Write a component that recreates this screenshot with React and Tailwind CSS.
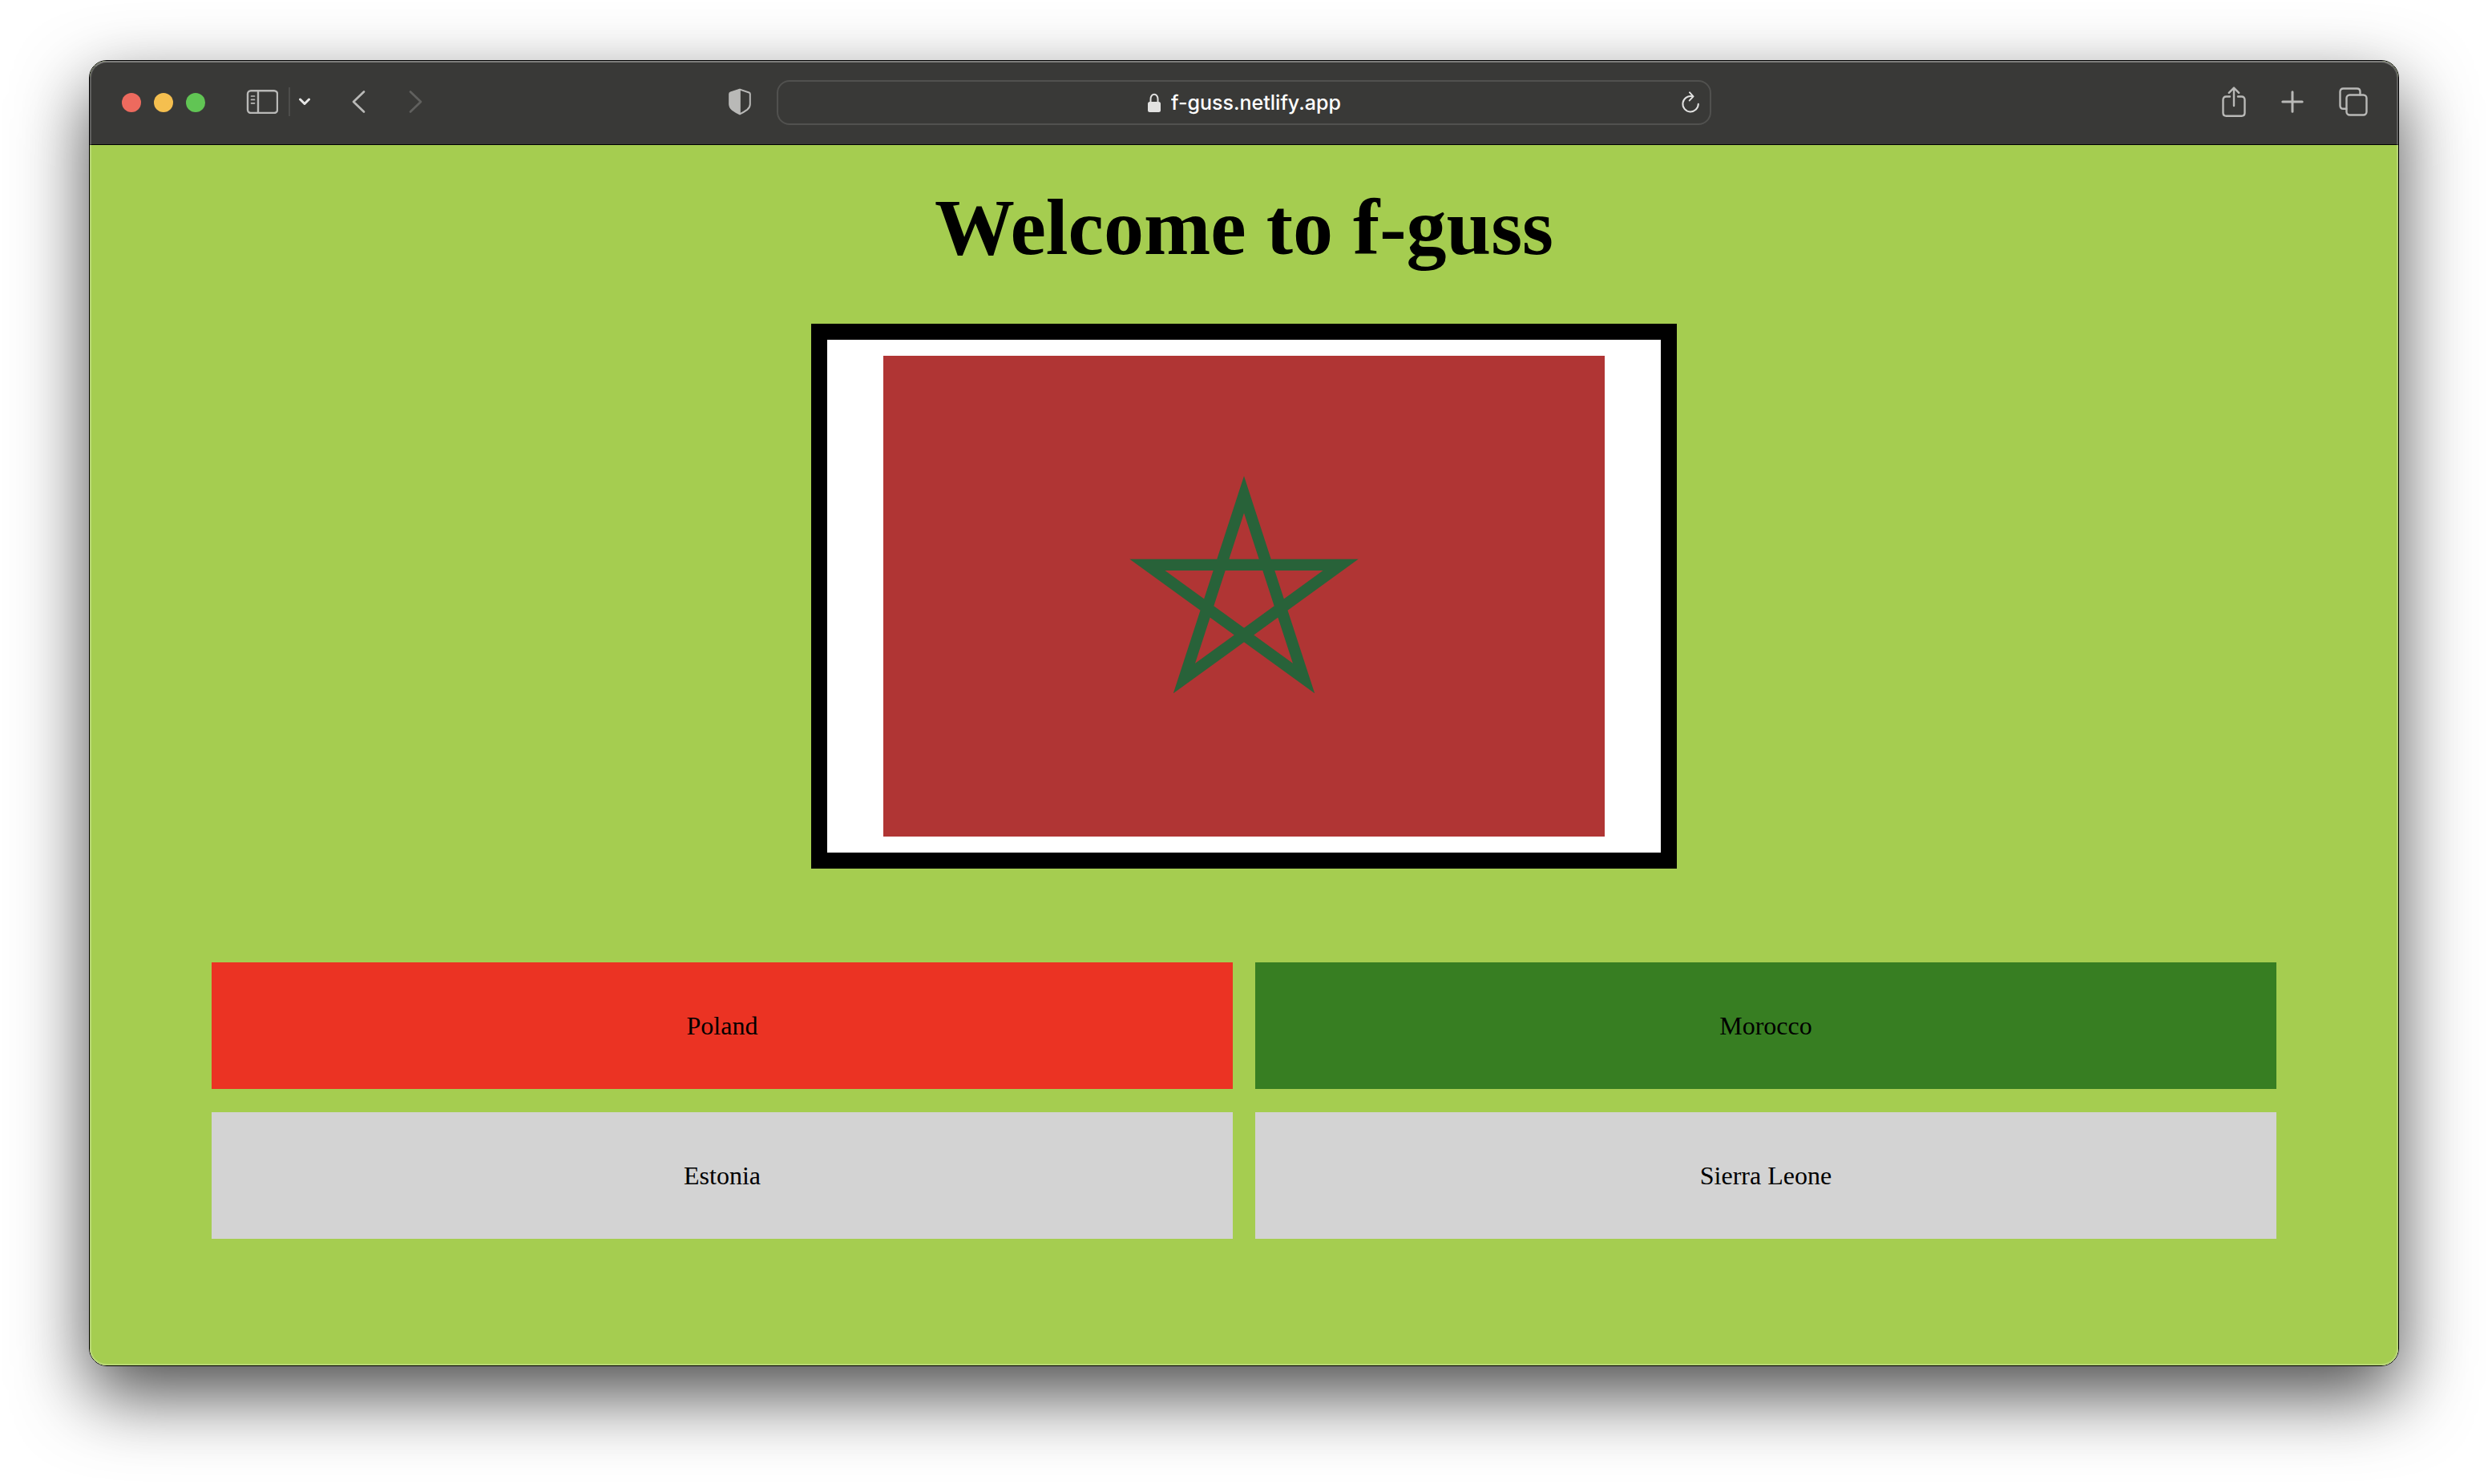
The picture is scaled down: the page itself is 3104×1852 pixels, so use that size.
const answers = [
  { name: "Poland", tone: "bg-[#eb3323]" },
  { name: "Morocco", tone: "bg-[#377e22]" },
  { name: "Estonia", tone: "bg-[#d3d3d3]" },
  { name: "Sierra Leone", tone: "bg-[#d3d3d3]" },
];

function Icon({ width, height, children, className = "" }) {
  return (
    <svg
      width={width}
      height={height}
      viewBox={`0 0 ${width} ${height}`}
      fill="none"
      stroke="currentColor"
      strokeWidth="2.4"
      strokeLinecap="round"
      strokeLinejoin="round"
      aria-hidden="true"
      className={`block shrink-0 ${className}`}
    >
      {children}
    </svg>
  );
}

function Toolbar() {
  return (
    <header className="grid h-[105px] grid-cols-[minmax(0,1fr)_40.5%_minmax(0,1fr)] items-center border-b border-black bg-[#393937] text-[#b9b9b7]">
      <div className="flex items-center pl-10 pr-8">
        <div className="flex gap-4">
          <button aria-label="Close" className="size-6 rounded-full bg-[#ed6a5e]" />
          <button aria-label="Minimize" className="size-6 rounded-full bg-[#f5bf4f]" />
          <button aria-label="Zoom" className="size-6 rounded-full bg-[#61c554]" />
        </div>
        <div className="flex flex-1 items-center pb-0.5">
          <button aria-label="Sidebar" className="ml-[51px]">
            <Icon width={40} height={30}>
              <rect x="2" y="1.2" width="37" height="27.8" rx="4" />
              <path d="M15 1.5V29" />
              <path d="M6.5 8h4M6.5 12.4h4M6.5 16.8h4" strokeWidth="1.7" />
            </Icon>
          </button>
          <span className="ml-[13px] h-9 w-0.5 bg-[#4d4d4b]" />
          <button aria-label="Tab groups" className="ml-[10px] text-[#e6e6e5]">
            <Icon width={16} height={10}>
              <path d="M2.5 2 8 7.5 13.5 2" strokeWidth="3" />
            </Icon>
          </button>
          <button aria-label="Back" className="ml-[50px]">
            <Icon width={18} height={30}>
              <path d="M16 2.5 3 15l13 12.5" strokeWidth="2.7" />
            </Icon>
          </button>
          <button aria-label="Forward" className="ml-[54px] text-[#60605e]">
            <Icon width={18} height={30}>
              <path d="M2 2.5 15 15 2 27.5" strokeWidth="2.7" />
            </Icon>
          </button>
          <button aria-label="Privacy report" className="ml-auto">
            <Icon width={28} height={34}>
              <path d="M14 1.6 25.5 5.5q1.3.5 1.3 1.8V20q0 4-3.6 6.9Q19 30 14 32.4 9 30 4.8 26.9 1.2 24 1.2 20V7.300q0-1.300 1.300-1.800Z" strokeWidth="2" />
              <path d="M14 1.6 2.5 5.5Q1.2 6 1.2 7.3V20q0 4 3.6 6.9Q9 30 14 32.4Z" fill="currentColor" strokeWidth="1" />
            </Icon>
          </button>
        </div>
      </div>
      <div className="flex h-14 items-center rounded-2xl border-2 border-[#51514f] px-3 text-[#e2e2e1]">
        <span className="flex-1" />
        <div className="flex items-center gap-3">
          <Icon width={18} height={24}>
            <path d="M4.500 12V7.500a4.500 5.800 0 0 1 9 0V12" strokeWidth="2" />
            <rect x="1" y="11" width="16" height="13" rx="2.500" fill="currentColor" stroke="none" />
          </Icon>
          <input
            type="text"
            aria-label="Address"
            defaultValue="f-guss.netlify.app"
            className="h-10 [field-sizing:content] bg-transparent font-['Inter',sans-serif] text-[25px] leading-8 font-medium text-white outline-none"
          />
        </div>
        <span className="flex flex-1 justify-end">
          <button aria-label="Reload">
            <Icon width={24} height={28}>
              <path d="M14 6.200A9.700 9.700 0 1 0 21.800 15.800" strokeWidth="2" />
              <path d="M11 1.400 15.500 6.400 10.800 11.400" strokeWidth="2" />
            </Icon>
          </button>
        </span>
      </div>
      <div className="flex items-center justify-end gap-11 pr-[38px] pb-[3px]">
        <button aria-label="Share">
          <Icon width={30} height={38}>
            <path d="M10 12.5H5.500q-4 0-4 4V32.700q0 4 4 4H24.500q4 0 4-4V16.500q0-4-4-4H20" />
            <path d="M15 24V2M8.800 7.800 15 1.600 21.200 7.800" />
          </Icon>
        </button>
        <button aria-label="New tab">
          <Icon width={28} height={28}>
            <path d="M14 1.800V26.200M1.800 14H26.200" strokeWidth="3" />
          </Icon>
        </button>
        <button aria-label="Tab overview">
          <Icon width={36} height={36}>
            <rect x="9.500" y="9.500" width="25" height="25" rx="4" />
            <path d="M9.300 26.800H5.500q-4 0-4-4V5.500q0-4 4-4H22.500q4 0 4 4V9.300" />
          </Icon>
        </button>
      </div>
    </header>
  );
}

function MoroccoFlag() {
  return (
    <svg viewBox="0 0 900 600" role="img" aria-label="Flag to guess" className="block h-auto w-[90%]">
      <rect width="900" height="600" fill="#b03534" />
      <path
        d="M450 173.150 524.560 402.620 329.360 260.800H570.640L375.440 402.620Z"
        fill="none"
        stroke="#286239"
        strokeWidth="14.300"
        strokeMiterlimit="10"
      />
    </svg>
  );
}

export default function App() {
  return (
    <div className="min-h-screen overflow-hidden bg-white px-[111px] pt-[75px] pb-[147px]">
      <div className="relative rounded-[22px] border border-black shadow-[0_36px_90px_rgba(0,0,0,0.7)]">
        <div className="overflow-hidden rounded-[21px] bg-[#a5cd50]">
          <Toolbar />
          <main className="flex flex-col items-center px-[152px] pt-[47px] pb-[158px] font-['Liberation_Serif',serif] text-black">
            <h1 className="text-[100px] leading-[112px] font-bold">Welcome to f-guss</h1>
            <div className="mt-16 flex w-full max-w-[1080px] justify-center border-20 border-black bg-white p-5">
              <MoroccoFlag />
            </div>
            <div className="mt-[117px] grid w-full grid-cols-2 gap-x-7 gap-y-[29px]">
              {answers.map((a) => (
                <button key={a.name} className={`h-[158px] text-[32px] leading-9 ${a.tone}`}>
                  {a.name}
                </button>
              ))}
            </div>
          </main>
        </div>
        <div className="pointer-events-none absolute inset-0 rounded-[21px] border-2 border-white/20 border-t-white/35" />
      </div>
    </div>
  );
}
